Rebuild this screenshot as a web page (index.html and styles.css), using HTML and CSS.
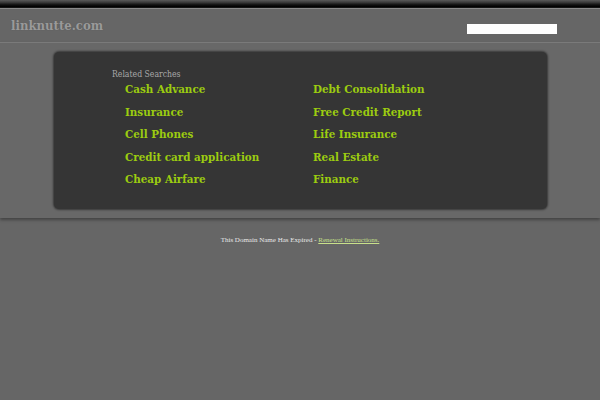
FILE: index.html
```html
<!DOCTYPE html>
<html>
<head>
<meta charset="utf-8">
<link rel="stylesheet" href="styles.css">
</head>
<body>
<div class="topbar"></div>
<div class="header">
  <div class="logo">linknutte.com</div>
  <div class="search"></div>
</div>
<div class="content">
  <div class="panel">
    <div class="rs-title">Related Searches</div>
    <div class="links">
      <a href="#">Cash Advance</a>
      <a href="#">Debt Consolidation</a>
      <a href="#">Insurance</a>
      <a href="#">Free Credit Report</a>
      <a href="#">Cell Phones</a>
      <a href="#">Life Insurance</a>
      <a href="#">Credit card application</a>
      <a href="#">Real Estate</a>
      <a href="#">Cheap Airfare</a>
      <a href="#">Finance</a>
    </div>
  </div>
</div>
<div class="footer">This Domain Name Has Expired - <a href="#">Renewal Instructions.</a></div>
</body>
</html>
```
FILE: styles.css
```css
html, body {
  margin: 0;
  padding: 0;
  background: #666666;
}
.topbar {
  height: 8px;
  background: linear-gradient(#5a5a5a 0, #3a3a3a 30%, #111 60%, #000 85%, #222 100%);
}
.header {
  height: 33px;
  border-top: 1px solid #8a8a8a;
  display: flex;
  justify-content: space-between;
  align-items: flex-start;
  padding: 0 43px 0 11px;
  background: #666;
}
.logo {
  font-family: "DejaVu Serif", serif;
  font-stretch: condensed;
  font-weight: bold;
  font-size: 13px;
  color: #9a9a9a;
  margin-top: 9px;
  text-shadow: 0 0 1px #555;
}
.search {
  width: 90px;
  height: 10px;
  background: #fff;
  margin-top: 15px;
}
.content {
  border-top: 1px solid #7a7a7a;
  background: #686868;
  padding: 9px 53px 9px 54px;
  box-shadow: 0 2px 3px rgba(0,0,0,0.35);
}
.panel {
  height: 157px;
  box-sizing: border-box;
  background: #353535;
  border-radius: 5px;
  box-shadow: 0 0 2px 1px rgba(0,0,0,0.45);
  padding: 16px 0 0 58px;
}
.rs-title {
  font-family: "DejaVu Serif", serif;
  font-stretch: condensed;
  font-size: 8.6px;
  color: #a8a8a8;
  line-height: 12px;
}
.links {
  display: grid;
  grid-template-columns: 188px auto;
  padding-left: 13px;
  margin-top: -2px;
}
.links a {
  font-family: "DejaVu Serif", serif;
  font-stretch: condensed;
  font-weight: bold;
  font-size: 11.5px;
  line-height: 22.5px;
  color: #9ccc10;
  text-decoration: none;
}
.footer {
  text-align: center;
  font-family: "Liberation Serif", serif;
  font-size: 7px;
  color: #e8e8e8;
  margin-top: 18px;
}
.footer a {
  color: #c8e08a;
}
```
